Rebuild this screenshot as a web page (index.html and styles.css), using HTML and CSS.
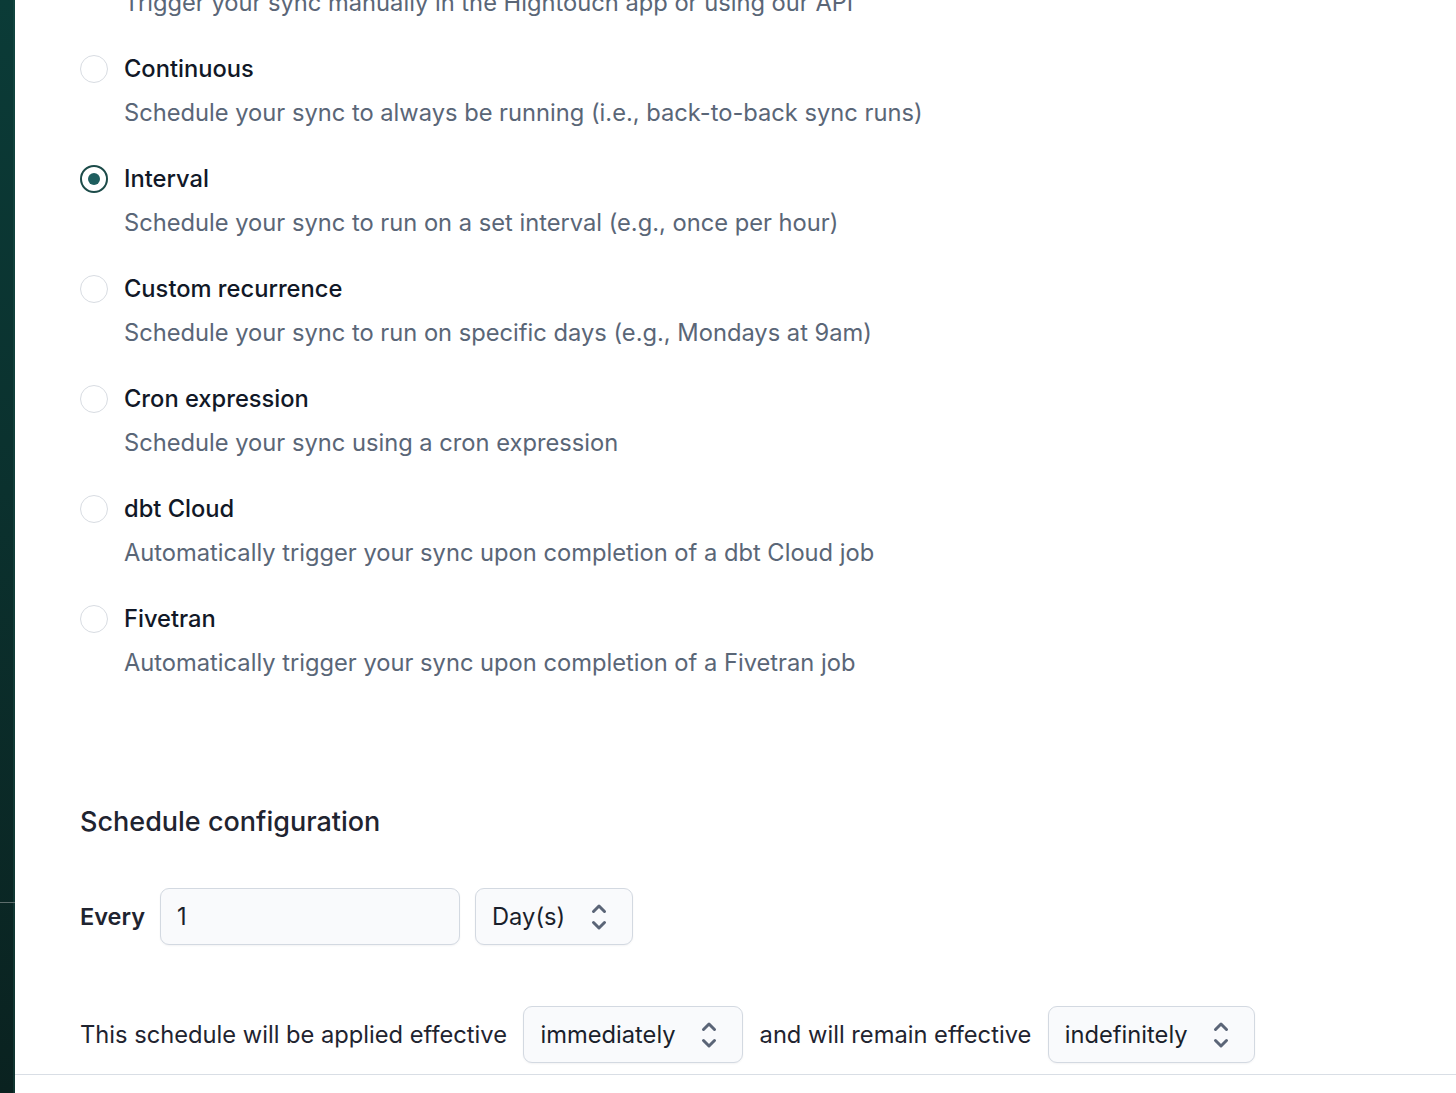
FILE: index.html
```html
<!DOCTYPE html>
<html lang="en">
<head>
<meta charset="utf-8">
<title>Schedule</title>
<link rel="stylesheet" href="styles.css">
</head>
<body>
<div class="app">
  <aside class="rail"><div class="rail-line"></div></aside>
  <main class="main">
    <div class="options">
      <div class="option">
        <div class="option-head"><span class="radio"></span><span class="option-title">Manual</span></div>
        <div class="option-desc">Trigger your sync manually in the Hightouch app or using our API</div>
      </div>
      <div class="option">
        <div class="option-head"><span class="radio"></span><span class="option-title">Continuous</span></div>
        <div class="option-desc">Schedule your sync to always be running (i.e., back-to-back sync runs)</div>
      </div>
      <div class="option">
        <div class="option-head"><span class="radio checked"></span><span class="option-title">Interval</span></div>
        <div class="option-desc">Schedule your sync to run on a set interval (e.g., once per hour)</div>
      </div>
      <div class="option">
        <div class="option-head"><span class="radio"></span><span class="option-title">Custom recurrence</span></div>
        <div class="option-desc">Schedule your sync to run on specific days (e.g., Mondays at 9am)</div>
      </div>
      <div class="option">
        <div class="option-head"><span class="radio"></span><span class="option-title">Cron expression</span></div>
        <div class="option-desc">Schedule your sync using a cron expression</div>
      </div>
      <div class="option">
        <div class="option-head"><span class="radio"></span><span class="option-title">dbt Cloud</span></div>
        <div class="option-desc">Automatically trigger your sync upon completion of a dbt Cloud job</div>
      </div>
      <div class="option">
        <div class="option-head"><span class="radio"></span><span class="option-title">Fivetran</span></div>
        <div class="option-desc">Automatically trigger your sync upon completion of a Fivetran job</div>
      </div>
    </div>

    <section class="config">
      <h2 class="config-title">Schedule configuration</h2>
      <div class="row every-row">
        <span class="every-label">Every</span>
        <div class="field input-field">1</div>
        <div class="field select-field">
          <span>Day(s)</span>
          <svg class="chev" width="16" height="28" viewBox="0 0 16 28"><path d="M2.5 8.5 L8 3 L13.5 8.5 M2.5 19.5 L8 25 L13.5 19.5" fill="none" stroke="#5b6577" stroke-width="3" stroke-linecap="round" stroke-linejoin="round"/></svg>
        </div>
      </div>
      <div class="row effective-row">
        <span class="row-text">This schedule will be applied effective</span>
        <div class="field select-field">
          <span>immediately</span>
          <svg class="chev" width="16" height="28" viewBox="0 0 16 28"><path d="M2.5 8.5 L8 3 L13.5 8.5 M2.5 19.5 L8 25 L13.5 19.5" fill="none" stroke="#5b6577" stroke-width="3" stroke-linecap="round" stroke-linejoin="round"/></svg>
        </div>
        <span class="row-text">and will remain effective</span>
        <div class="field select-field">
          <span>indefinitely</span>
          <svg class="chev" width="16" height="28" viewBox="0 0 16 28"><path d="M2.5 8.5 L8 3 L13.5 8.5 M2.5 19.5 L8 25 L13.5 19.5" fill="none" stroke="#5b6577" stroke-width="3" stroke-linecap="round" stroke-linejoin="round"/></svg>
        </div>
      </div>
    </section>
  </main>
</div>
</body>
</html>
```

FILE: styles.css
```css
html, body {
  margin: 0;
  padding: 0;
  background: #ffffff;
  height: 100%;
  overflow: hidden;
}

body {
  font-family: "Inter", "Noto Sans", "Liberation Sans", sans-serif;
  color: #111827;
}

.app {
  display: flex;
  height: 1093px;
}

.rail {
  width: 15px;
  flex: 0 0 15px;
  background: linear-gradient(180deg, #0b3b37 0%, #0b312e 45%, #0a2220 100%);
  box-shadow: inset -2px 0 0 rgba(30, 90, 80, 0.35);
  padding-top: 902px;
  box-sizing: border-box;
}

.rail-line {
  height: 1px;
  background: #5d6d6c;
}

.main {
  flex: 1;
  padding-left: 65px;
  overflow: hidden;
}

.options {
  margin-top: -57px;
}

.option {
  padding-bottom: 34px;
}

.option-head {
  display: flex;
  align-items: center;
  gap: 16px;
  height: 32px;
}

.radio {
  width: 28px;
  height: 28px;
  box-sizing: border-box;
  border-radius: 50%;
  border: 1.5px solid #d8dce2;
  background: #fff;
  display: flex;
  align-items: center;
  justify-content: center;
  flex: 0 0 28px;
}

.radio.checked {
  border: 2px solid #1c4b49;
}

.radio.checked::after {
  content: "";
  width: 12px;
  height: 12px;
  border-radius: 50%;
  background: #1e5e5f;
}

.option-title {
  font-size: 23.7px;
  line-height: 32px;
  font-weight: 500;
  color: #111827;
}

.option-desc {
  margin-top: 12px;
  padding-left: 44px;
  font-size: 23.7px;
  line-height: 32px;
  color: #5a6677;
}

.config {
  margin-top: 91px;
  border-bottom: 1px solid #d9dee5;
  margin-left: -65px;
  padding-left: 65px;
  padding-bottom: 11px;
}

.config-title {
  margin: 0;
  font-size: 27px;
  line-height: 36px;
  font-weight: 500;
  color: #1f2430;
}

.row {
  display: flex;
  align-items: center;
  gap: 16px;
}

.every-row {
  margin-top: 48px;
  gap: 15px;
}

.effective-row {
  margin-top: 61px;
  gap: 16.5px;
}

.every-label {
  font-size: 23.5px;
  font-weight: 600;
  color: #1f2430;
}

.row-text {
  font-size: 23.7px;
  color: #1f2430;
}

.field {
  height: 57px;
  box-sizing: border-box;
  border: 1.5px solid #d3d9e1;
  border-radius: 9px;
  background: #f9fafc;
  box-shadow: 0 1px 2px rgba(16, 24, 40, 0.05);
  font-size: 23.7px;
  color: #1a1f2b;
  display: flex;
  align-items: center;
}

.input-field {
  width: 300px;
  padding-left: 16px;
}

.select-field {
  padding: 0 25px 0 16px;
  gap: 25.5px;
}

.chev {
  display: block;
  flex: 0 0 16px;
}
```
